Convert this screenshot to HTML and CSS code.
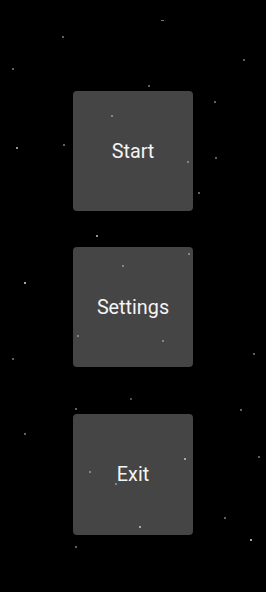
FILE: index.html
```html
<!DOCTYPE html>
<html lang="en">
<head>
    <meta charset="UTF-8">
    <meta name="viewport" content="width=device-width, initial-scale=1.0">
    <title>Menu</title>
    <link rel="stylesheet" href="styles.css">
</head>
<body>
    <div class="menu">
        <button class="menu-btn">Start</button>
        <button class="menu-btn">Settings</button>
        <button class="menu-btn exit">Exit</button>
    </div>

    <!-- stars -->
    <svg class="stars" width="266" height="592" viewBox="0 0 266 592">
        <g fill="#d8d8d8">
            <rect x="161" y="20" width="3" height="1" fill="#777"/>
            <circle cx="63" cy="37" r="0.8"/>
            <circle cx="13" cy="69" r="0.8"/>
            <circle cx="244" cy="60" r="0.8"/>
            <circle cx="149" cy="86" r="0.8"/>
            <circle cx="112" cy="116" r="0.8"/>
            <circle cx="64" cy="145" r="0.8"/>
            <circle cx="17" cy="148" r="0.9"/>
            <circle cx="188" cy="162" r="0.8"/>
            <circle cx="216" cy="158" r="0.8"/>
            <circle cx="215" cy="102" r="0.8"/>
            <circle cx="199" cy="193" r="0.8"/>
            <circle cx="97" cy="236" r="0.9"/>
            <circle cx="189" cy="254" r="0.8"/>
            <circle cx="123" cy="266" r="0.8"/>
            <circle cx="25" cy="283" r="1"/>
            <circle cx="78" cy="336" r="0.8"/>
            <circle cx="163" cy="341" r="0.8"/>
            <circle cx="254" cy="354" r="0.8"/>
            <circle cx="13" cy="359" r="0.8"/>
            <circle cx="131" cy="399" r="0.7"/>
            <circle cx="76" cy="409" r="0.8"/>
            <circle cx="241" cy="410" r="0.8"/>
            <circle cx="25" cy="434" r="0.8"/>
            <circle cx="259" cy="457" r="0.8"/>
            <circle cx="185" cy="459" r="0.9"/>
            <circle cx="90" cy="472" r="0.8"/>
            <circle cx="116" cy="484" r="0.8"/>
            <circle cx="225" cy="518" r="0.8"/>
            <circle cx="140" cy="527" r="0.9"/>
            <circle cx="251" cy="540" r="1"/>
            <circle cx="76" cy="547" r="0.8"/>
        </g>
    </svg>
</body>
</html>
```

FILE: styles.css
```css
* {
    box-sizing: border-box;
    margin: 0;
    padding: 0;
}

body {
    background: #000;
    width: 266px;
    height: 592px;
    overflow: hidden;
    position: relative;
    font-family: Roboto, 'Liberation Sans', Arial, sans-serif;
}

.menu {
    display: flex;
    flex-direction: column;
    align-items: center;
    gap: 36px;
    padding-top: 91px;
}

.menu-btn {
    width: 120px;
    height: 120px;
    background: #454545;
    border: none;
    border-radius: 4px;
    color: #f4f4f4;
    font-family: inherit;
    font-size: 19.8px;
    font-weight: 400;
}

.menu-btn.exit {
    height: 121px;
    margin-top: 11px;
}

.stars {
    position: absolute;
    left: 0;
    top: 0;
    pointer-events: none;
}
```
